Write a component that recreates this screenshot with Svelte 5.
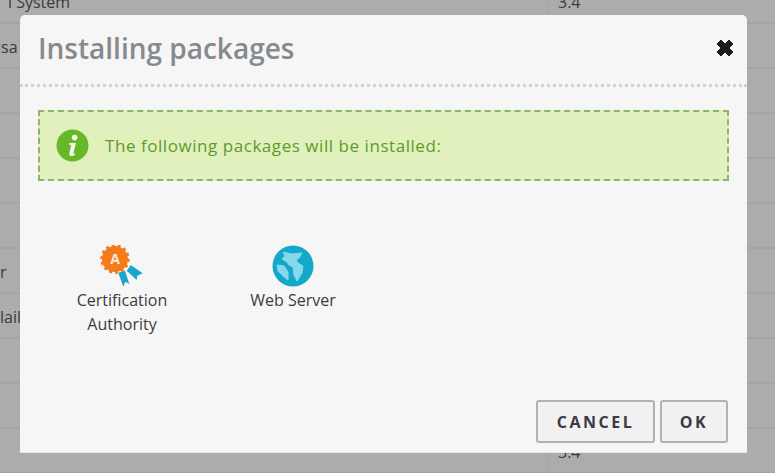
<script>
  const rows = [
    { name: "l System", version: "3.4", indent: 8 },
    { name: "sa", version: "", indent: 1 },
    { name: "", version: "", indent: 0 },
    { name: "", version: "", indent: 0 },
    { name: "", version: "", indent: 0 },
    { name: "", version: "", indent: 0 },
    { name: "r", version: "", indent: 0 },
    { name: "lail", version: "", indent: 0 },
    { name: "", version: "", indent: 0 },
    { name: "", version: "", indent: 0 },
    { name: "", version: "3.4", indent: 0 }
  ];
</script>

<div class="page">
  <div class="table">
    {#each rows as row}
      <div class="row">
        <span class="name" style="padding-left: {row.indent}px">{row.name}</span>
        <span class="version">{row.version}</span>
      </div>
    {/each}
  </div>

  <div class="modal">
    <header class="modal-head">
      <h1>Installing packages</h1>
      <svg class="close" width="18" height="18" viewBox="0 0 18 18">
        <path d="M1 5 5 1l4 4 4-4 4 4-4 4 4 4-4 4-4-4-4 4-4-4 4-4z" fill="#1c1c1c" stroke="#1c1c1c" stroke-linejoin="round" />
      </svg>
    </header>

    <div class="notice">
      <svg width="33" height="33" viewBox="0 0 33 33">
        <circle cx="16.5" cy="16.5" r="16" fill="#66b828" />
        <circle cx="18.6" cy="8.6" r="2.8" fill="#f4f7ea" />
        <path d="M13.4 14h6.6l-2.6 10.2c-.2.9.5 1 1.8.4l-.3 1.5c-2.6 1.4-6.2 1.4-5.6-1.6l1.9-8.2-1.9-.4z" fill="#f4f7ea" />
      </svg>
      <span>The following packages will be installed:</span>
    </div>

    <div class="packages">
      <div class="package">
        <svg width="44" height="42" viewBox="0 0 44 42">
          <path d="M18.3 27.700 25 25.700 29.300 39 25.300 36.700 23.300 41.700z" fill="#1ba6c9" />
          <path d="M30.700 20 26.700 25.700 36.700 35 37.300 30.700 42.700 28.300z" fill="#1ba6c9" />
          <circle cx="15" cy="14" r="13" fill="#f47a1c" />
          <circle cx="15" cy="14" r="13.500" fill="none" stroke="#f47a1c" stroke-width="2.500" stroke-dasharray="3 3" />
          <text x="15" y="19" text-anchor="middle" class="badge-letter">A</text>
        </svg>
        <span>Certification Authority</span>
      </div>
      <div class="package">
        <svg width="42" height="42" viewBox="0 0 42 42">
          <circle cx="21" cy="21" r="20.500" fill="#12a8ca" />
          <path d="M11 7 20 9 30 8 27 13 24 15 26 18 31 21 30 28 25 36 22 30 21 22 17 20 15 17 10 14 13 11zM5 20 12 21 16 27 16 35 11 31 6 26z" fill="#86d8ec" stroke="#86d8ec" stroke-linejoin="round" />
        </svg>
        <span>Web Server</span>
      </div>
    </div>

    <footer class="actions">
      <button type="button" class="cancel">CANCEL</button>
      <button type="button" class="ok">OK</button>
    </footer>
  </div>
</div>

<style>
  :global(body) {
    margin: 0;
  }

  .page {
    position: relative;
    width: 775px;
    height: 473px;
    overflow: hidden;
    background: #acacac;
    font-family: "Open Sans", "DejaVu Sans", sans-serif;
    color: #3a3a3a;
  }

  .table {
    display: flex;
    flex-direction: column;
    margin-top: -21px;
  }

  .row {
    display: grid;
    grid-template-columns: 548px 1fr;
    height: 45px;
    box-sizing: border-box;
    border-bottom: 2px solid #a4a4a4;
    font-size: 16px;
    line-height: 46px;
  }

  .version {
    border-left: 1px solid #a2a2a2;
    padding-left: 9px;
  }

  .modal {
    position: absolute;
    left: 20px;
    top: 15px;
    width: 727px;
    height: 438px;
    box-sizing: border-box;
    display: flex;
    flex-direction: column;
    background: #f6f6f7;
    border-radius: 5px 5px 0 0;
    border-bottom: 1px solid #e6e6e6;
  }

  .modal-head {
    display: flex;
    align-items: center;
    justify-content: space-between;
    height: 72px;
    box-sizing: border-box;
    padding: 0 13px 4px 18px;
    border-bottom: 3px dotted #d2d2d2;
  }

  h1 {
    margin: 0;
    font-size: 28px;
    font-weight: 600;
    color: #858a8e;
  }

  .notice {
    display: flex;
    align-items: center;
    gap: 16px;
    height: 71px;
    box-sizing: border-box;
    margin: 23px 18px 0 18px;
    padding-left: 16px;
    background: #e0f1bd;
    border: 2px dashed #8db36c;
    color: #5f9a2a;
    font-size: 17px;
    letter-spacing: 0.55px;
  }

  .packages {
    display: flex;
    margin-top: 64px;
    padding-left: 47px;
  }

  .package {
    display: flex;
    flex-direction: column;
    align-items: center;
    width: 110px;
    margin-right: 61px;
    gap: 1px;
    font-size: 16px;
    line-height: 24px;
    text-align: center;
    color: #3c3c3c;
  }

  .badge-letter {
    font-family: "Open Sans", sans-serif;
    font-size: 14px;
    font-weight: 700;
    fill: #fde8d4;
  }

  .actions {
    display: flex;
    justify-content: flex-end;
    gap: 5px;
    margin-top: auto;
    padding: 0 19px 9px 0;
  }

  button {
    height: 43px;
    box-sizing: border-box;
    background: #f1f1f1;
    border: 2px solid #b2b2b2;
    border-radius: 3px;
    font-family: inherit;
    font-size: 16px;
    font-weight: 700;
    letter-spacing: 2.500px;
    color: #3a3a42;
  }

  .cancel {
    width: 119px;
  }

  .ok {
    width: 68px;
  }
</style>
